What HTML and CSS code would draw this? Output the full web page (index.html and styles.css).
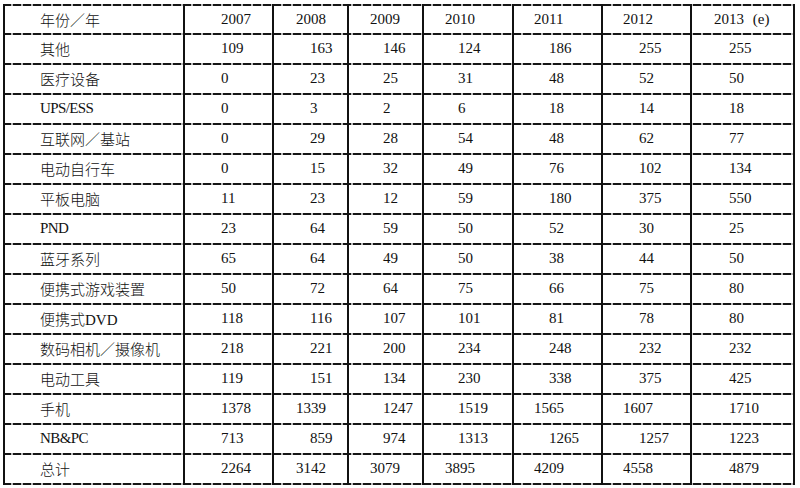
FILE: index.html
```html
<!DOCTYPE html>
<html lang="zh-CN">
<head>
<meta charset="utf-8">
<title>年份/年</title>
<link rel="stylesheet" href="styles.css">
</head>
<body>
<div class="sheet">
  <div class="row head"><div>年份／年</div><div>2007</div><div class="w">2008</div><div class="w">2009</div><div class="w">2010</div><div class="w">2011</div><div class="w">2012</div><div class="w e">2013 (e)</div></div>
  <div class="row"><div>其他</div><div>109</div><div>163</div><div>146</div><div>124</div><div>186</div><div>255</div><div>255</div></div>
  <div class="row"><div>医疗设备</div><div>0</div><div>23</div><div>25</div><div>31</div><div>48</div><div>52</div><div>50</div></div>
  <div class="row"><div class="lat">UPS/ESS</div><div>0</div><div>3</div><div>2</div><div>6</div><div>18</div><div>14</div><div>18</div></div>
  <div class="row"><div>互联网／基站</div><div>0</div><div>29</div><div>28</div><div>54</div><div>48</div><div>62</div><div>77</div></div>
  <div class="row"><div>电动自行车</div><div>0</div><div>15</div><div>32</div><div>49</div><div>76</div><div>102</div><div>134</div></div>
  <div class="row"><div>平板电脑</div><div>11</div><div>23</div><div>12</div><div>59</div><div>180</div><div>375</div><div>550</div></div>
  <div class="row"><div class="lat">PND</div><div>23</div><div>64</div><div>59</div><div>50</div><div>52</div><div>30</div><div>25</div></div>
  <div class="row"><div>蓝牙系列</div><div>65</div><div>64</div><div>49</div><div>50</div><div>38</div><div>44</div><div>50</div></div>
  <div class="row"><div>便携式游戏装置</div><div>50</div><div>72</div><div>64</div><div>75</div><div>66</div><div>75</div><div>80</div></div>
  <div class="row"><div>便携式DVD</div><div>118</div><div>116</div><div>107</div><div>101</div><div>81</div><div>78</div><div>80</div></div>
  <div class="row"><div>数码相机／摄像机</div><div>218</div><div>221</div><div>200</div><div>234</div><div>248</div><div>232</div><div>232</div></div>
  <div class="row"><div>电动工具</div><div>119</div><div>151</div><div>134</div><div>230</div><div>338</div><div>375</div><div>425</div></div>
  <div class="row"><div>手机</div><div>1378</div><div class="w">1339</div><div>1247</div><div>1519</div><div class="w">1565</div><div class="w">1607</div><div>1710</div></div>
  <div class="row"><div class="lat">NB&amp;PC</div><div>713</div><div>859</div><div>974</div><div>1313</div><div>1265</div><div>1257</div><div>1223</div></div>
  <div class="row last"><div>总计</div><div>2264</div><div class="w">3142</div><div class="w">3079</div><div class="w">3895</div><div class="w">4209</div><div class="w">4558</div><div>4879</div></div>
</div>
</body>
</html>
```

FILE: styles.css
```css
html, body {
  margin: 0;
  padding: 0;
  background: #ffffff;
}

body {
  font-family: "Liberation Serif", "Noto Sans CJK SC", serif;
  font-size: 15px;
  font-weight: 300;
  color: #111111;
}

.sheet {
  margin: 4px 0 0 3px;
  width: 792px;
}

.row {
  display: grid;
  grid-template-columns: 180px 89px 75px 75px 90px 89px 89px 105px;
  height: 30px;
  background-image: repeating-linear-gradient(90deg, #151515 0 8px, #b8b8b8 8px 10px);
  background-size: 100% 2px;
  background-position: left top;
  background-repeat: no-repeat;
}

.row.head {
  height: 29px;
}

.row.last {
  height: 32px;
  background-image:
    repeating-linear-gradient(90deg, #151515 0 8px, #b8b8b8 8px 10px),
    repeating-linear-gradient(90deg, #151515 0 8px, #b8b8b8 8px 10px);
  background-position: left top, left bottom;
}

.row.last > div {
  padding-bottom: 2px;
}

.row > div {
  box-sizing: border-box;
  display: flex;
  align-items: center;
  border-left: 2px solid #111111;
  padding-top: 1px;
  white-space: nowrap;
}

.row > div:last-child {
  border-right: 2px solid #111111;
}

.row > div:nth-child(1) { padding-left: 35px; }
.row > div:nth-child(2) { padding-left: 36px; }
.row > div:nth-child(3) { padding-left: 36px; }
.row > div:nth-child(4) { padding-left: 34px; }
.row > div:nth-child(5) { padding-left: 34px; }
.row > div:nth-child(6) { padding-left: 35px; }
.row > div:nth-child(7) { padding-left: 36px; }
.row > div:nth-child(8) { padding-left: 37px; }

.row > div.w:nth-child(3) { padding-left: 22px; }
.row > div.w:nth-child(4) { padding-left: 21px; }
.row > div.w:nth-child(5) { padding-left: 21px; }
.row > div.w:nth-child(6) { padding-left: 20px; }
.row > div.w:nth-child(7) { padding-left: 20px; }
.row > div.w:nth-child(8) { padding-left: 22px; }

.row > div.e {
  word-spacing: 5px;
}

.row > div.lat {
  letter-spacing: -0.6px;
}
```
